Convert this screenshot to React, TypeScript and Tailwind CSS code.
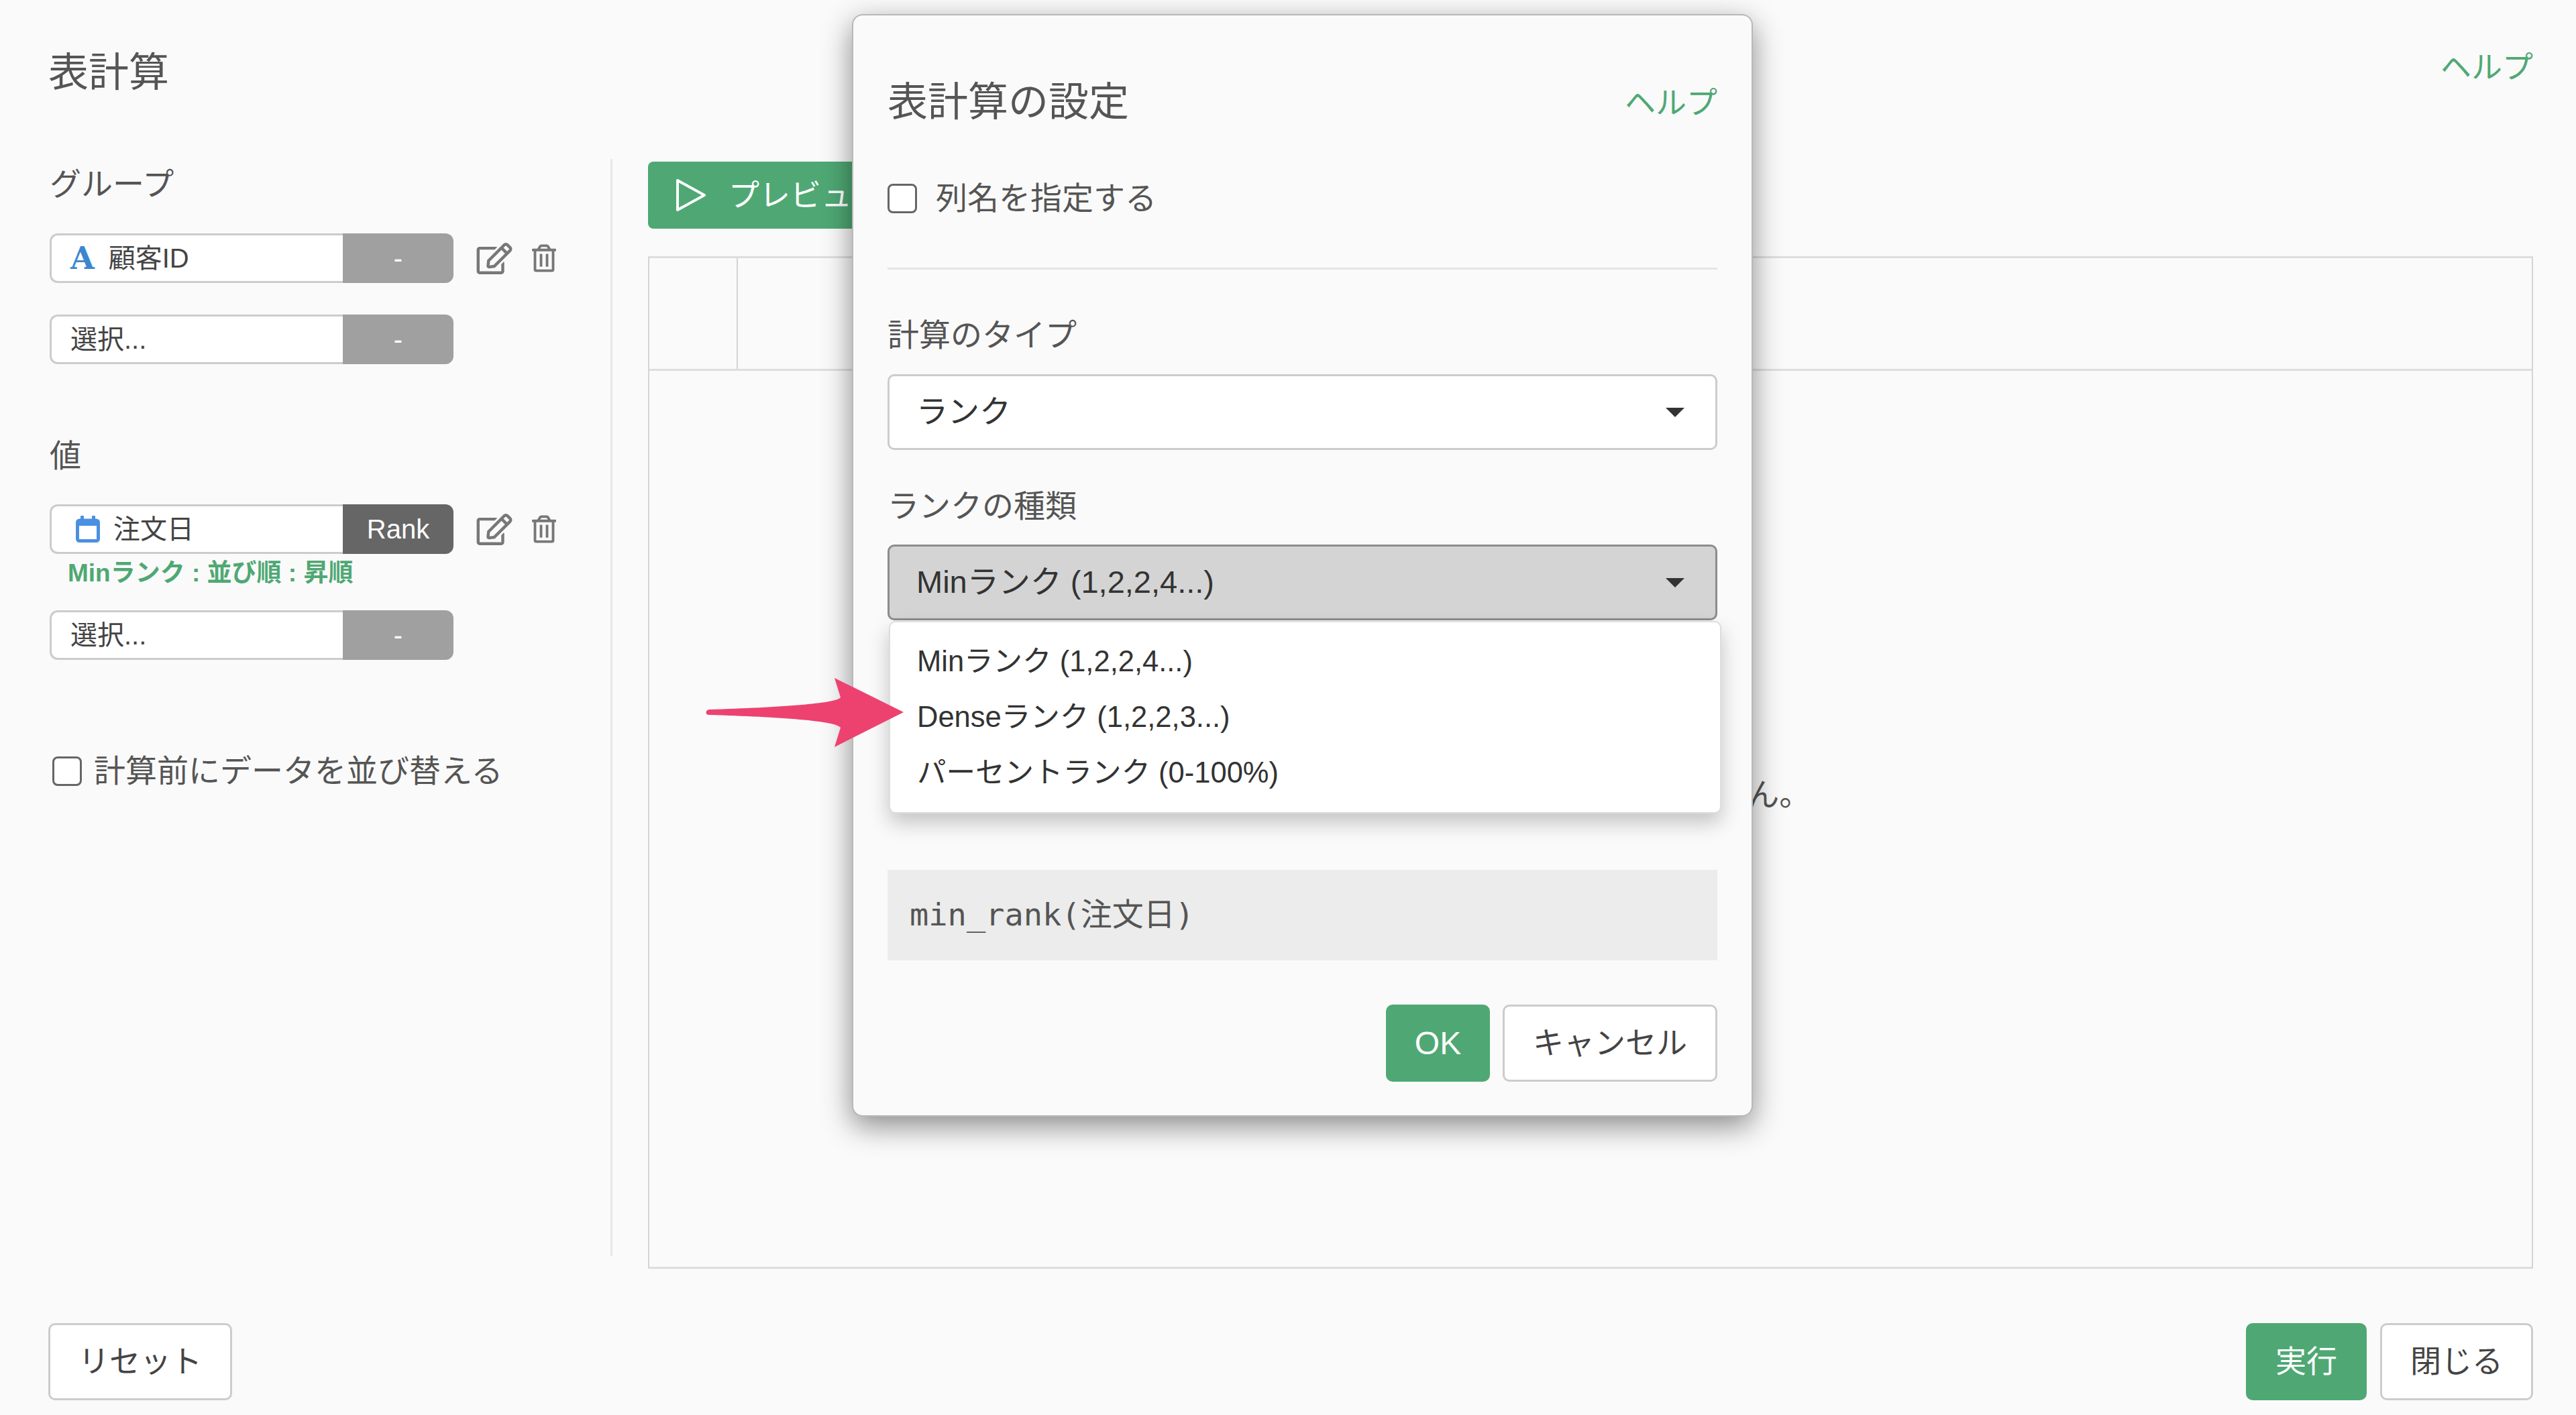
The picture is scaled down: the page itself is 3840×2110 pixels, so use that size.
import { FaRegEdit, FaRegTrashAlt } from "react-icons/fa";

function Caret() {
  return <span className="h-0 w-0 border-x-[14px] border-t-[14px] border-x-transparent border-t-[#333]" />;
}

function CalendarIcon() {
  return (
    <svg viewBox="0 0 36 40" className="h-[40px] w-[36px]">
      <rect x="2.5" y="7" width="31" height="30.5" rx="3" fill="none" stroke="#4a90e2" strokeWidth="5" />
      <rect x="2" y="6" width="32" height="9" fill="#4a90e2" />
      <rect x="7" y="0" width="5" height="8" rx="1" fill="#4a90e2" />
      <rect x="24" y="0" width="5" height="8" rx="1" fill="#4a90e2" />
    </svg>
  );
}

function ColumnRow({ icon, label, tag, active, actions, textGap }: { icon?: React.ReactNode; label: string; tag: string; active?: boolean; actions?: boolean; textGap?: string }) {
  return (
    <div className="flex items-center">
      <div className="flex h-[74px] w-[602px]">
        <div className="flex w-[437px] items-center rounded-l-[12px] border-[3px] border-r-0 border-[#cccccc] bg-white pl-[28px] text-[40px] text-[#444]">
          {icon}
          <span className={textGap}>{label}</span>
        </div>
        <div className={active ? "flex w-[165px] items-center justify-center rounded-r-[12px] bg-[#666666] text-[40px] text-white" : "flex w-[165px] items-center justify-center rounded-r-[12px] bg-[#a0a0a0] text-[40px] text-white"}>
          {tag}
        </div>
      </div>
      {actions && (
        <div className="ml-[34px] flex items-center text-[#777777]">
          <FaRegEdit className="h-[47px] w-[54px]" />
          <FaRegTrashAlt className="ml-[29px] h-[42px] w-[36px]" />
        </div>
      )}
    </div>
  );
}

function Checkbox() {
  return <span className="block h-[44px] w-[44px] shrink-0 rounded-[8px] border-[3px] border-[#666666] bg-white" />;
}

function SelectBox({ label, open }: { label: string; open?: boolean }) {
  return (
    <div className={open ? "flex h-[113px] items-center justify-between rounded-[10px] border-[3px] border-[#8c8c8c] bg-[#d4d4d4] pl-[40px] pr-[46px] text-[47px] text-[#333]" : "flex h-[113px] items-center justify-between rounded-[10px] border-[3px] border-[#cccccc] bg-white pl-[40px] pr-[46px] text-[47px] text-[#333]"}>
      <span>{label}</span>
      <Caret />
    </div>
  );
}

function RankDropdown() {
  const items = ["Minランク (1,2,2,4...)", "Denseランク (1,2,2,3...)", "パーセントランク (0-100%)"];
  return (
    <div className="absolute left-[2px] top-[114px] z-10 flex h-[287px] w-[1241px] flex-col justify-center rounded-[10px] border-[2px] border-[#dddddd] bg-white pl-[40px] text-[43.5px] text-[#333] shadow-[0_14px_30px_rgba(0,0,0,0.22)]">
      {items.map((item) => (
        <div key={item} className="flex h-[83px] items-center">
          {item}
        </div>
      ))}
    </div>
  );
}

function SettingsModal() {
  return (
    <div className="absolute left-[1270px] top-[21px] z-20 flex h-[1644px] w-[1343px] flex-col rounded-[16px] border-[2px] border-[#b8b8b8] bg-[#fafafa] px-[51px] pt-[90px] shadow-[0_14px_44px_rgba(0,0,0,0.45)]">
      <div className="flex h-[80px] items-center justify-between">
        <span className="text-[60px] text-[#555]">表計算の設定</span>
        <span className="text-[46px] text-[#4fa874]">ヘルプ</span>
      </div>
      <label className="mt-[81px] flex h-[44px] items-center gap-[28px] text-[47px] text-[#555]">
        <Checkbox />
        列名を指定する
      </label>
      <div className="mt-[81px] h-[3px] bg-[#e5e5e5]" />
      <div className="mt-[68px] h-[60px] text-[47px] leading-[60px] text-[#555]">計算のタイプ</div>
      <div className="mt-[28px]">
        <SelectBox label="ランク" />
      </div>
      <div className="mt-[54px] h-[60px] text-[47px] leading-[60px] text-[#555]">ランクの種類</div>
      <div className="relative mt-[27px]">
        <SelectBox label="Minランク (1,2,2,4...)" open />
        <RankDropdown />
      </div>
      <div className="mt-[372px] flex h-[135px] items-center bg-[#ececec] pl-[33px] font-['DejaVu_Sans_Mono','Noto_Sans_CJK_JP',monospace] text-[47px] text-[#555]">
        min_rank(注文日)
      </div>
      <div className="mt-[66px] flex justify-end gap-[19px]">
        <button className="h-[115px] w-[155px] rounded-[10px] bg-[#4fa874] text-[48px] text-white">OK</button>
        <button className="h-[115px] w-[320px] rounded-[10px] border-[3px] border-[#cccccc] bg-white text-[46px] text-[#444]">キャンセル</button>
      </div>
    </div>
  );
}

export default function App() {
  return (
    <div className="relative flex h-[2110px] flex-col overflow-hidden bg-[#fafafa] pl-[74px] pr-[64px] font-['Liberation_Sans','Noto_Sans_CJK_JP',sans-serif]">
      <header className="flex h-[205px] items-start justify-between pt-[60px]">
        <h1 className="-ml-[2px] mt-[4px] text-[60px] leading-[90px] text-[#555]">表計算</h1>
        <a className="text-[46px] leading-[80px] text-[#4fa874]">ヘルプ</a>
      </header>

      <div className="flex h-[1687px]">
        <aside className="w-[836px] shrink-0 pt-[45px]">
          <div className="h-[50px] text-[47px] leading-[50px] text-[#555]">グループ</div>
          <div className="mt-[48px] flex flex-col gap-[47px]">
            <ColumnRow
              icon={<span className="font-['DejaVu_Serif',serif] text-[46px] font-bold leading-none text-[#3b87cf]">A</span>}
              label="顧客ID"
              tag="-"
              actions
              textGap="ml-[21px]"
            />
            <ColumnRow label="選択..." tag="-" />
          </div>

          <div className="mt-[112px] h-[50px] text-[47px] leading-[50px] text-[#555]">値</div>
          <div className="mt-[47px]">
            <ColumnRow icon={<span className="ml-[8px]"><CalendarIcon /></span>} label="注文日" tag="Rank" active actions textGap="ml-[20px]" />
          </div>
          <div className="ml-[27px] mt-[9px] h-[40px] text-[37px] font-bold leading-[40px] text-[#4fa874]">Minランク : 並び順 : 昇順</div>
          <div className="mt-[35px]">
            <ColumnRow label="選択..." tag="-" />
          </div>

          <label className="mt-[144px] flex h-[44px] items-center gap-[18px] pl-[4px] text-[47px] text-[#555]">
            <Checkbox />
            計算前にデータを並び替える
          </label>
        </aside>

        <div className="mt-[32px] h-[1636px] w-[3px] shrink-0 bg-[#e8e8e8]" />

        <main className="ml-[53px] flex min-w-0 flex-1 flex-col pt-[36px]">
          <button className="flex h-[100px] w-[420px] items-center rounded-[8px] bg-[#4fa874] pl-[40px] text-[46px] text-white">
            <svg viewBox="0 0 48 50" className="h-[50px] w-[48px]">
              <path d="M4 3 L44 25 L4 47 Z" fill="none" stroke="#ffffff" strokeWidth="4" strokeLinejoin="round" />
            </svg>
            <span className="ml-[32px]">プレビュー</span>
          </button>

          <div className="mt-[41px] flex flex-1 flex-col border-x-[2px] border-b-[3px] border-t-[3px] border-x-[#d4d4d4] border-b-[#dedede] border-t-[#dedede]">
            <div className="flex h-[168px] shrink-0 border-b-[3px] border-[#dedede]">
              <div className="w-[132px] border-r-[2px] border-[#d4d4d4]" />
            </div>
            <div className="flex flex-1 items-center justify-center pb-[72px] text-[47px] text-[#555]">
              表示するデータがありません。
            </div>
          </div>
        </main>
      </div>

      <footer className="mt-[81px] flex justify-between">
        <button className="-ml-[2px] h-[115px] w-[274px] rounded-[10px] border-[3px] border-[#cccccc] bg-white text-[46px] text-[#444]">リセット</button>
        <div className="flex gap-[20px]">
          <button className="h-[115px] w-[180px] rounded-[10px] bg-[#4fa874] text-[46px] text-white">実行</button>
          <button className="h-[115px] w-[228px] rounded-[10px] border-[3px] border-[#cccccc] bg-white text-[46px] text-[#444]">閉じる</button>
        </div>
      </footer>

      <SettingsModal />

      <svg viewBox="0 0 295 103" className="absolute left-[1052px] top-[1011px] z-30 h-[103px] w-[295px]">
        <path
          d="M295 51 L192 0 L201 29 C195 38 110 44 5 47 C-1 48 -1 55 5 55 C110 58 195 64 201 74 L192 103 Z"
          fill="#ed4270"
        />
      </svg>
    </div>
  );
}
